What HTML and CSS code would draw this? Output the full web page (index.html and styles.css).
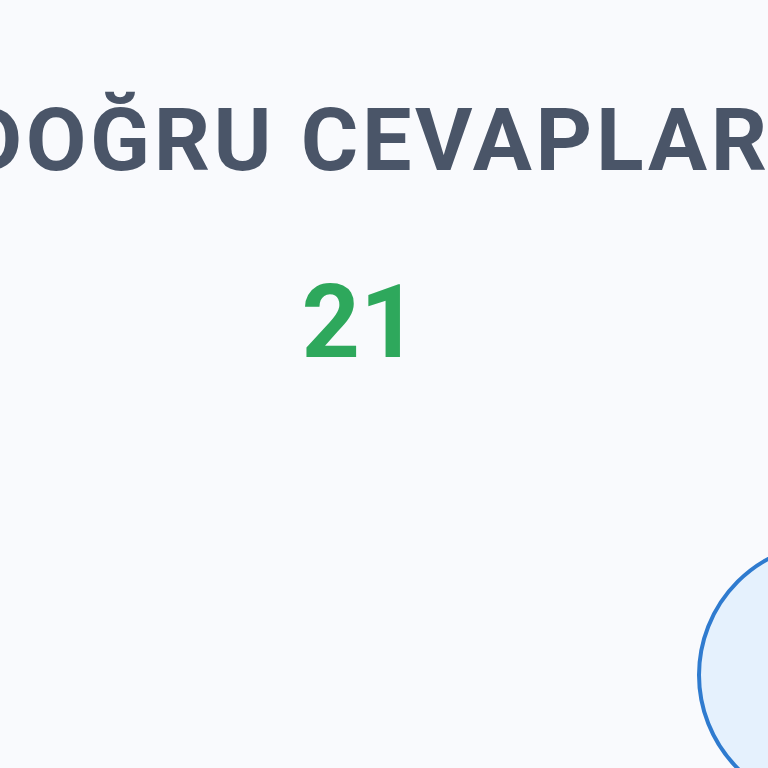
FILE: index.html
```html
<!DOCTYPE html>
<html lang="tr">
  <head>
    <meta charset="UTF-8" />
    <meta name="viewport" content="width=device-width, initial-scale=1.0" />
    <title>Sonuç</title>
    <link rel="stylesheet" href="styles.css">
  </head>
  <body>
    <div class="result">
      <div class="stat">
        <div class="stat-label">DOĞRU CEVAPLAR</div>
        <div class="stat-value">21</div>
      </div>
      <div class="badge-row">
        <div class="badge"></div>
      </div>
    </div>
  </body>
</html>
```

FILE: styles.css
```css
html,
body {
  margin: 0;
  height: 100%;
}
body {
  font-family: Roboto, "Noto Sans", Arial, sans-serif;
  background: #f9fafd;
  overflow: hidden;
}
.result {
  padding-top: 96px;
}
.stat {
  width: 790px;
  margin-left: -35px;
  text-align: center;
}
.stat-label {
  font-size: 88px;
  line-height: 1;
  font-weight: 700;
  color: #4a5568;
  letter-spacing: 3.6px;
  white-space: nowrap;
}
.stat-value {
  margin-top: 87px;
  font-size: 102px;
  line-height: 1;
  font-weight: 700;
  color: #2ea85c;
}
.badge-row {
  display: flex;
  justify-content: flex-end;
  margin-top: 168px;
  margin-right: -197px;
}
.badge {
  width: 260px;
  height: 260px;
  border: 4px solid #2f7bcf;
  border-radius: 50%;
  background: #e5f1fd;
}
```
